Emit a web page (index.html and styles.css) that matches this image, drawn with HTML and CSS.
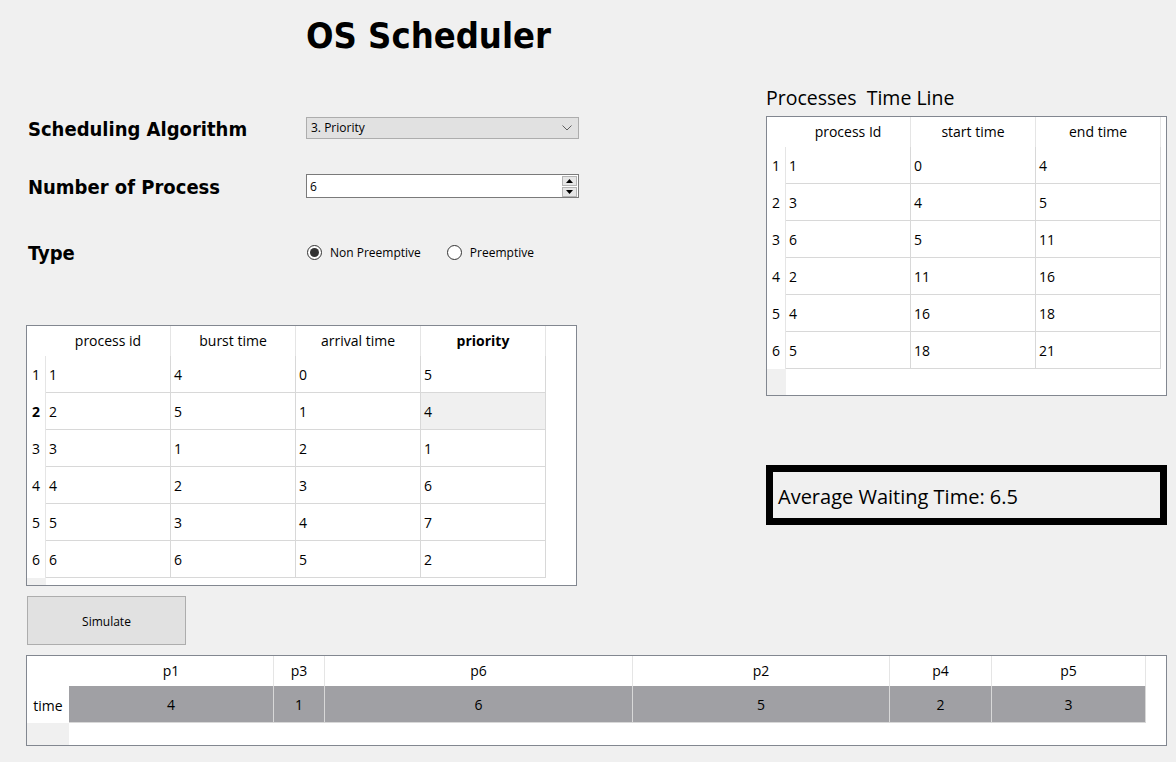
FILE: index.html
```html
<!DOCTYPE html>
<html>
<head>
<meta charset="utf-8">
<title>OS Scheduler</title>
<link rel="stylesheet" href="styles.css">
</head>
<body>
<div class="app">
  <div class="top">
    <div class="left">
      <h1 class="title">OS Scheduler</h1>
      <div class="form">
        <div class="row row-algo">
          <div class="label">Scheduling Algorithm</div>
          <div class="combo">
            <span>3. Priority</span>
            <svg class="chev" width="10" height="6" viewBox="0 0 10 6"><path d="M0.5 0.5 L5 5 L9.5 0.5" fill="none" stroke="#606060" stroke-width="1"/></svg>
          </div>
        </div>
        <div class="row row-num">
          <div class="label">Number of Process</div>
          <div class="spin">
            <span class="spin-val">6</span>
            <div class="spin-btns">
              <div class="spin-btn"><svg width="7" height="4" viewBox="0 0 7 4"><path d="M3.5 0 L7 4 L0 4 Z" fill="#000"/></svg></div>
              <div class="spin-btn"><svg width="7" height="4" viewBox="0 0 7 4"><path d="M0 0 L7 0 L3.5 4 Z" fill="#000"/></svg></div>
            </div>
          </div>
        </div>
        <div class="row row-type">
          <div class="label">Type</div>
          <div class="radios">
            <div class="radio"><span class="circle checked"></span><span>Non Preemptive</span></div>
            <div class="radio"><span class="circle"></span><span>Preemptive</span></div>
          </div>
        </div>
      </div>

      <div class="tbl tbl-proc">
        <div class="corner"></div>
        <div class="hh">process id</div>
        <div class="hh">burst time</div>
        <div class="hh">arrival time</div>
        <div class="hh bold">priority</div>

        <div class="vh">1</div><div class="c">1</div><div class="c">4</div><div class="c">0</div><div class="c">5</div>
        <div class="vh bold">2</div><div class="c">2</div><div class="c">5</div><div class="c">1</div><div class="c cur">4</div>
        <div class="vh">3</div><div class="c">3</div><div class="c">1</div><div class="c">2</div><div class="c">1</div>
        <div class="vh">4</div><div class="c">4</div><div class="c">2</div><div class="c">3</div><div class="c">6</div>
        <div class="vh">5</div><div class="c">5</div><div class="c">3</div><div class="c">4</div><div class="c">7</div>
        <div class="vh">6</div><div class="c">6</div><div class="c">6</div><div class="c">5</div><div class="c">2</div>
        <div class="vh-fill"></div>
      </div>

      <button class="btn">Simulate</button>
    </div>

    <div class="right">
      <div class="tl-title">Processes&nbsp; Time Line</div>
      <div class="tbl tbl-tl">
        <div class="corner"></div>
        <div class="hh">process Id</div>
        <div class="hh">start time</div>
        <div class="hh">end time</div>

        <div class="vh">1</div><div class="c">1</div><div class="c">0</div><div class="c">4</div>
        <div class="vh">2</div><div class="c">3</div><div class="c">4</div><div class="c">5</div>
        <div class="vh">3</div><div class="c">6</div><div class="c">5</div><div class="c">11</div>
        <div class="vh">4</div><div class="c">2</div><div class="c">11</div><div class="c">16</div>
        <div class="vh">5</div><div class="c">4</div><div class="c">16</div><div class="c">18</div>
        <div class="vh">6</div><div class="c">5</div><div class="c">18</div><div class="c">21</div>
        <div class="vh-fill"></div>
      </div>
      <div class="avg">Average Waiting Time: 6.5</div>
    </div>
  </div>

  <div class="tbl gantt">
    <div class="corner"></div>
    <div class="hh">p1</div>
    <div class="hh">p3</div>
    <div class="hh">p6</div>
    <div class="hh">p2</div>
    <div class="hh">p4</div>
    <div class="hh">p5</div>

    <div class="vh">time</div>
    <div class="g">4</div>
    <div class="g">1</div>
    <div class="g">6</div>
    <div class="g">5</div>
    <div class="g">2</div>
    <div class="g">3</div>
    <div class="vh-fill"></div>
  </div>
</div>
</body>
</html>
```

FILE: styles.css
```css
* { box-sizing: border-box; }

html, body {
  margin: 0;
  padding: 0;
  background: #f0f0f0;
}

body {
  width: 1176px;
  height: 762px;
  overflow: hidden;
  font-family: "Open Sans", "Noto Sans", sans-serif;
  color: #000;
}

.app {
  padding-left: 26px;
}

.top {
  display: flex;
  gap: 187px;
}

.left {
  width: 553px;
  display: flex;
  flex-direction: column;
}

.title {
  margin: 0 0 0 280px;
  padding-top: 15px;
  height: 57px;
  font-family: "DejaVu Sans Condensed", "DejaVu Sans", sans-serif;
  font-stretch: condensed;
  font-weight: bold;
  font-size: 36px;
  line-height: 42px;
  letter-spacing: 0;
}

.form {
  margin-top: 60px;
  display: flex;
  flex-direction: column;
}

.row {
  display: flex;
  align-items: center;
}

.row-algo { height: 22px; }
.row-num { height: 24px; margin-top: 35px; }
.row-type { height: 22px; margin-top: 43px; }

.label {
  width: 280px;
  padding-left: 2px;
  font-family: "DejaVu Sans Condensed", "DejaVu Sans", sans-serif;
  font-stretch: condensed;
  font-weight: bold;
  font-size: 20px;
  line-height: 24px;
  position: relative;
  top: 1px;
}

.combo {
  width: 273px;
  height: 22px;
  background: #e1e1e1;
  border: 1px solid #adadad;
  display: flex;
  align-items: center;
  justify-content: space-between;
  padding: 0 5px 1px 4px;
  font-size: 12px;
}

.chev { margin-right: 1px; }

.spin {
  width: 273px;
  height: 24px;
  background: #fff;
  border: 1px solid #7a7a7a;
  display: flex;
  align-items: center;
  justify-content: space-between;
  padding: 0 1px 0 3px;
  font-size: 12px;
}

.spin-btns {
  display: flex;
  flex-direction: column;
  gap: 1px;
}

.spin-btn {
  width: 15px;
  height: 10px;
  background: #e6e6e6;
  border: 1px solid #b4b4b4;
  display: flex;
  align-items: center;
  justify-content: center;
}

.radios {
  display: flex;
  align-items: center;
  gap: 26px;
  padding-left: 1px;
  font-size: 12px;
}

.radio {
  display: flex;
  align-items: center;
  gap: 8px;
}

.circle {
  width: 15px;
  height: 15px;
  border: 1px solid #333;
  border-radius: 50%;
  background: #fff;
  display: flex;
  align-items: center;
  justify-content: center;
}

.circle.checked::after {
  content: "";
  width: 9px;
  height: 9px;
  border-radius: 50%;
  background: #333;
}

/* tables */
.tbl {
  display: grid;
  background: #fff;
  border: 1px solid #828790;
  font-size: 14px;
  align-content: start;
  justify-content: start;
}

.tbl > div {
  display: flex;
  align-items: center;
}

.corner { background: #fff; }

.hh {
  justify-content: center;
  border-right: 1px solid #e5e5e5;
  padding-bottom: 1px;
}

.vh {
  justify-content: center;
  border-right: 1px solid #e5e5e5;
}

.vh-fill {
  background: #f0f0f0;
}

.c {
  padding-left: 3px;
  border-right: 1px solid #d8d8d8;
  border-bottom: 1px solid #d8d8d8;
}

.c.cur { background: #f0f0f0; }

.bold { font-weight: bold; }

.tbl-proc {
  margin-top: 62px;
  width: 551px;
  height: 261px;
  grid-template-columns: 19px repeat(4, 125px);
  grid-template-rows: 30px repeat(6, 37px) 1fr;
}

.btn {
  margin-top: 10px;
  margin-left: 1px;
  width: 159px;
  height: 49px;
  background: #e1e1e1;
  border: 1px solid #adadad;
  font-family: "Open Sans", "Noto Sans", sans-serif;
  font-size: 12px;
  color: #000;
  line-height: 16px;
  padding: 2px 0 0 0;
}

.right {
  width: 401px;
  display: flex;
  flex-direction: column;
}

.tl-title {
  margin-top: 85px;
  height: 31px;
  font-size: 19.5px;
  line-height: 26px;
}

.tbl-tl {
  width: 401px;
  height: 280px;
  grid-template-columns: 19px repeat(3, 125px);
  grid-template-rows: 30px repeat(6, 37px) 1fr;
}

.avg {
  margin-top: 69px;
  height: 60px;
  border: 7px solid #000;
  background: #f0f0f0;
  font-size: 20px;
  display: flex;
  align-items: center;
  padding-left: 5px;
  padding-top: 2px;
}

.gantt {
  margin-top: 10px;
  width: 1141px;
  height: 91px;
  grid-template-columns: 42px 205px 51px 308px 257px 102px 154px;
  grid-template-rows: 30px 37px 1fr;
}

.gantt .vh { border-right: none; padding-top: 2px; }

.g {
  justify-content: center;
  background: #a0a0a4;
  border-right: 1px solid #d8d8d8;
  border-bottom: 1px solid #d8d8d8;
  padding-top: 1px;
}
```
